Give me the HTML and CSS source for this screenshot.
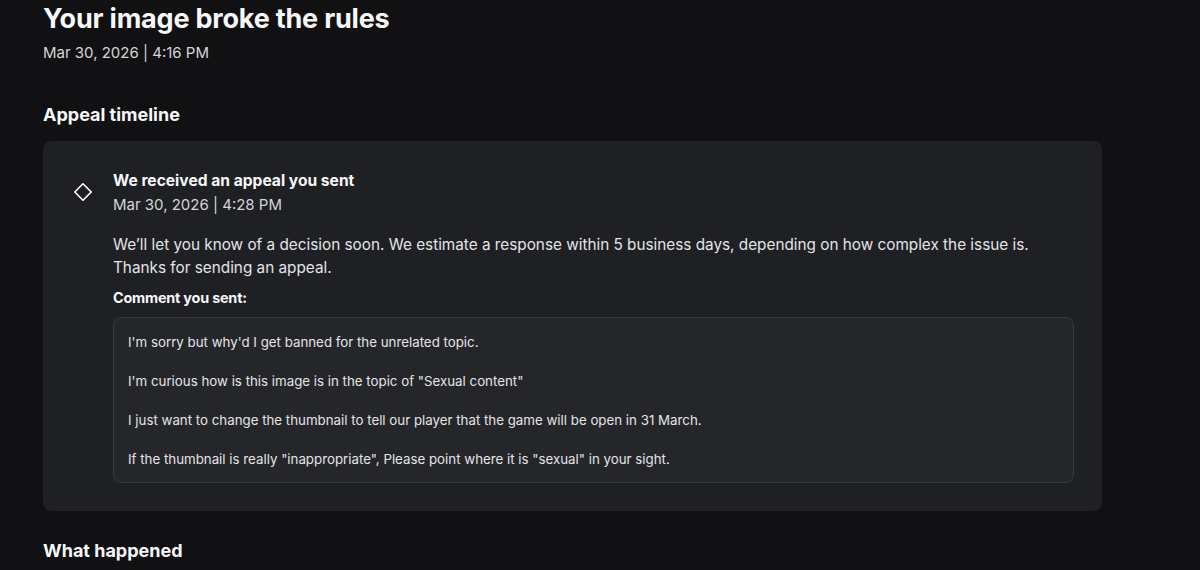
FILE: index.html
```html
<!DOCTYPE html>
<html lang="en">
<head>
<meta charset="utf-8">
<link rel="stylesheet" href="styles.css">
</head>
<body>
<main class="page">
  <header class="head">
    <h1 class="title">Your image broke the rules</h1>
    <div class="date">Mar 30, 2026 | 4:16 PM</div>
  </header>
  <section class="section">
    <h2 class="section-title">Appeal timeline</h2>
    <div class="card">
      <div class="event">
        <div class="event-icon">
          <svg width="20" height="20" viewBox="0 0 20 20"><path d="M10 1.8 L18.2 10 L10 18.2 L1.8 10 Z" fill="none" stroke="#ffffff" stroke-width="1.6" stroke-linejoin="round"/></svg>
        </div>
        <div class="event-body">
          <div class="event-title">We received an appeal you sent</div>
          <div class="event-date">Mar 30, 2026 | 4:28 PM</div>
          <p class="event-text">We’ll let you know of a decision soon. We estimate a response within 5 business days, depending on how complex the issue is. Thanks for sending an appeal.</p>
          <div class="comment-label">Comment you sent:</div>
          <div class="comment">
            <p>I'm sorry but why'd I get banned for the unrelated topic.</p>
            <p>I'm curious how is this image is in the topic of "Sexual content"</p>
            <p>I just want to change the thumbnail to tell our player that the game will be open in 31 March.</p>
            <p>If the thumbnail is really "inappropriate", Please point where it is "sexual" in your sight.</p>
          </div>
        </div>
      </div>
    </div>
  </section>
  <section class="section section-next">
    <h2 class="section-title">What happened</h2>
  </section>
</main>
</body>
</html>
```
FILE: styles.css
```css
html, body {
  margin: 0;
  padding: 0;
  background: #111113;
}
body {
  font-family: Inter, "Noto Sans", sans-serif;
  color: #f7f7f8;
  overflow: hidden;
}
.page {
  padding: 0 98px 0 43px;
}
.head {
  padding-top: 1px;
}
.title {
  margin: 0;
  font-size: 27px;
  font-weight: 700;
  line-height: 36px;
  letter-spacing: -0.2px;
}
.date {
  margin-top: 5px;
  font-size: 15px;
  line-height: 22px;
  color: #d5d5d9;
}
.section {
  margin-top: 39px;
}
.section-next {
  margin-top: 28px;
}
.section-title {
  margin: 0 0 14px 0;
  font-size: 18px;
  font-weight: 700;
  line-height: 24px;
}
.card {
  background: #1f2024;
  border-radius: 8px;
  padding: 30px 28px 28px 30px;
}
.event {
  display: flex;
  gap: 20px;
}
.event-icon {
  width: 20px;
  padding-top: 11px;
}
.event-body {
  flex: 1;
}
.event-title {
  font-size: 15.6px;
  font-weight: 700;
  line-height: 20px;
}
.event-date {
  margin-top: 3px;
  font-size: 15px;
  line-height: 22px;
  color: #d5d5d9;
}
.event-text {
  margin: 17px 0 0 0;
  font-size: 15.3px;
  line-height: 23px;
  color: #e4e4e7;
}
.comment-label {
  margin-top: 10px;
  font-size: 14.4px;
  font-weight: 700;
  line-height: 18px;
  letter-spacing: -0.2px;
}
.comment {
  margin-top: 10px;
  border: 1px solid #393a3f;
  border-radius: 8px;
  background: #25262a;
  padding: 14px 14px 13px 14px;
}
.comment p {
  margin: 0 0 19px 0;
  font-size: 13.3px;
  line-height: 20px;
  color: #e4e4e7;
}
.comment p:last-child {
  margin-bottom: 0;
}
```
